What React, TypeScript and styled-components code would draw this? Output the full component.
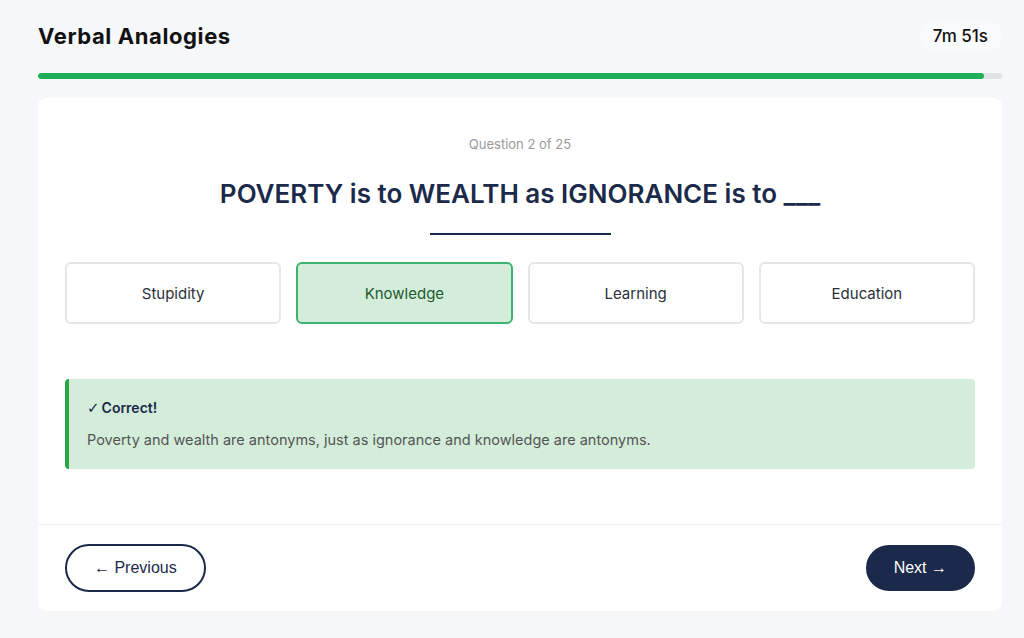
import React from "react";
import styled, { createGlobalStyle } from "styled-components";

const Global = createGlobalStyle`
  html, body { margin: 0; padding: 0; background: #f6f7f9; }
  body { font-family: Inter, "Noto Sans", sans-serif; }
  * { box-sizing: border-box; }
`;

const Page = styled.div`
  width: 1024px;
  height: 638px;
  padding: 0 22px 0 38px;
  display: flex;
  flex-direction: column;
`;

const Header = styled.header`
  display: flex;
  align-items: center;
  justify-content: space-between;
  height: 71px;
`;

const Title = styled.h1`
  margin: 0;
  font-family: Inter, sans-serif;
  font-weight: 700;
  font-size: 22px;
  letter-spacing: 0.6px;
  color: #111;
`;

const Timer = styled.div`
  background: #f9fafb;
  border-radius: 16px;
  padding: 6px 14px;
  font-family: Inter, sans-serif;
  font-size: 17px;
  font-weight: 500;
  color: #111;
`;

const Track = styled.div`
  height: 6px;
  border-radius: 3px;
  background: #e1e2e4;
  overflow: hidden;
  margin-top: 2px;
`;

const Fill = styled.div`
  height: 100%;
  background: #1fae5a;
  border-radius: 3px;
`;

const Card = styled.main`
  margin-top: 19px;
  background: #fff;
  border-radius: 8px;
  display: flex;
  flex-direction: column;
`;

const Body = styled.section`
  padding: 36px 27px 55px;
  display: flex;
  flex-direction: column;
  align-items: center;
`;

const Counter = styled.div`
  font-size: 13px;
  line-height: 20px;
  color: #9a9a9a;
`;

const Question = styled.h2`
  margin: 22px 0 0;
  font-size: 26px;
  line-height: 36px;
  font-weight: 600;
  color: #1b2a4a;
`;

const Blank = styled.div`
  width: 181px;
  height: 2px;
  background: #1b2a4a;
  margin-top: 21px;
`;

const Options = styled.div`
  align-self: stretch;
  margin-top: 27px;
  display: grid;
  grid-template-columns: repeat(4, 1fr);
  gap: 15px;
`;

const Option = styled.button<{ $selected?: boolean }>`
  height: 62px;
  border-radius: 6px;
  border: 2px solid ${(p) => (p.$selected ? "#3cb371" : "#e6e6e6")};
  background: ${(p) => (p.$selected ? "#d4edda" : "#fff")};
  color: ${(p) => (p.$selected ? "#1e5b2f" : "#2a2f3a")};
  font-family: Inter, sans-serif;
  font-size: 15px;
  cursor: pointer;
`;

const Feedback = styled.div`
  align-self: stretch;
  margin-top: 55px;
  background: #d4edda;
  border-left: 4px solid #28a745;
  border-radius: 4px;
  padding: 19px 18px 19px;
  display: flex;
  flex-direction: column;
  gap: 12px;
`;

const FeedbackTitle = styled.div`
  font-size: 14px;
  line-height: 20px;
  font-weight: 600;
  color: #1b2a4a;
`;

const Check = styled.span`
  font-family: "DejaVu Sans", sans-serif;
  font-size: 15px;
  font-weight: 400;
  margin-right: 2px;
`;

const FeedbackText = styled.div`
  font-size: 14.5px;
  line-height: 20px;
  color: #555;
`;

const Footer = styled.footer`
  border-top: 1px solid #eef0f2;
  padding: 19px 27px 19px;
  display: flex;
  justify-content: space-between;
  align-items: center;
`;

const NavButton = styled.button<{ $primary?: boolean }>`
  height: ${(p) => (p.$primary ? "46px" : "48px")};
  padding: 0 ${(p) => (p.$primary ? "26px" : "27px")};
  border-radius: 24px;
  border: 2px solid #1b2a4a;
  background: ${(p) => (p.$primary ? "#1b2a4a" : "#fff")};
  color: ${(p) => (p.$primary ? "#fff" : "#1b2a4a")};
  font-family: "Liberation Sans", Arial, sans-serif;
  font-size: 16px;
  cursor: pointer;
`;

const options = ["Stupidity", "Knowledge", "Learning", "Education"];

export default function App() {
  return (
    <>
      <Global />
      <Page>
        <Header>
          <Title>Verbal Analogies</Title>
          <Timer>7m 51s</Timer>
        </Header>
        <Track>
          <Fill style={{ width: `${(946 / 964) * 100}%` }} />
        </Track>
        <Card>
          <Body>
            <Counter>Question 2 of 25</Counter>
            <Question>POVERTY is to WEALTH as IGNORANCE is to ___</Question>
            <Blank />
            <Options>
              {options.map((o) => (
                <Option key={o} $selected={o === "Knowledge"}>
                  {o}
                </Option>
              ))}
            </Options>
            <Feedback>
              <FeedbackTitle>
                <Check>✓</Check>Correct!
              </FeedbackTitle>
              <FeedbackText>
                Poverty and wealth are antonyms, just as ignorance and knowledge are antonyms.
              </FeedbackText>
            </Feedback>
          </Body>
          <Footer>
            <NavButton>← Previous</NavButton>
            <NavButton $primary>Next →</NavButton>
          </Footer>
        </Card>
      </Page>
    </>
  );
}
